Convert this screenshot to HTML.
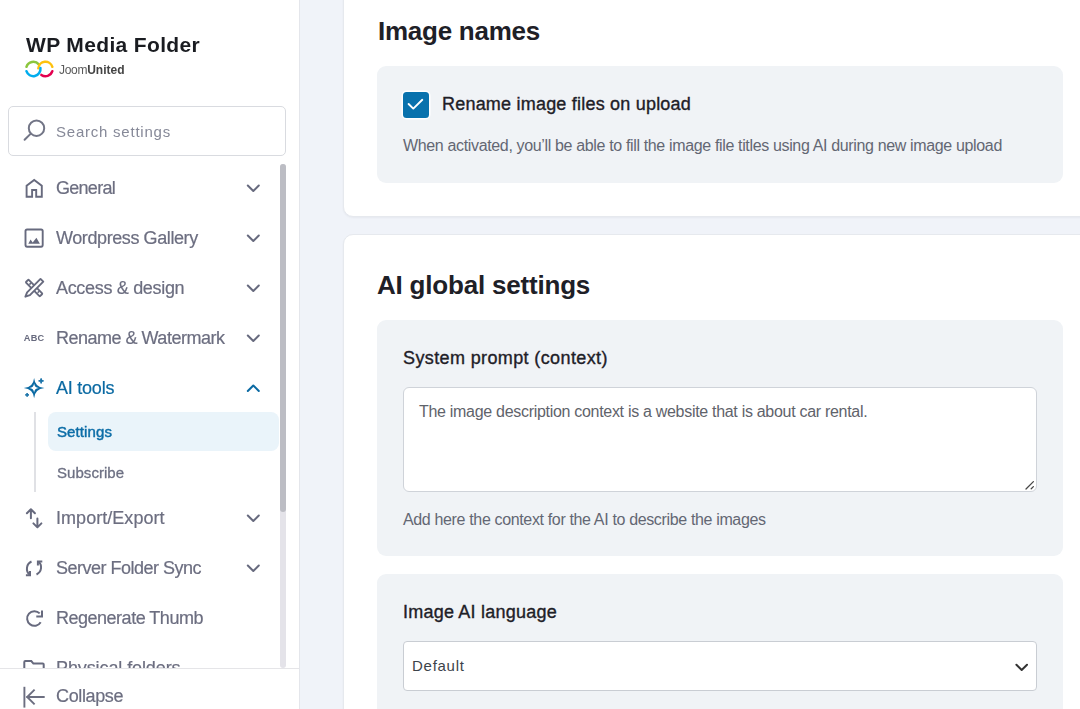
<!DOCTYPE html>
<html><head><meta charset="utf-8">
<style>
*{box-sizing:border-box;margin:0;padding:0}
html,body{width:1080px;height:709px;overflow:hidden}
body{position:relative;background:#f0f3f9;font-family:"Liberation Sans",sans-serif;}
.t{position:absolute;white-space:nowrap;line-height:1}
#side{position:absolute;left:0;top:0;width:300px;height:709px;background:#fff;border-right:1px solid #e4e6eb;overflow:hidden;will-change:transform}
.nav{color:#6c6e80;font-size:18px;-webkit-text-stroke:0.2px currentColor}
.ico{position:absolute}
.chev{position:absolute;left:246px;width:14px;height:9px}
.card{position:absolute;background:#fff;border:1px solid #e6e9ee;border-radius:10px;box-shadow:0 1px 2px rgba(30,40,60,0.05)}
.panel{position:absolute;background:#f0f3f6;border-radius:9px}
.h2{font-size:26px;font-weight:700;color:#1e2027}
.lbl{font-size:18px;color:#1e2027;-webkit-text-stroke:0.35px #1e2027}
.desc{font-size:16px;color:#636773}
</style></head><body>
<div id="side">
  <div class="t" style="left:26px;top:34px;font-size:21px;font-weight:700;color:#1a1c21;letter-spacing:0.35px">WP Media Folder</div>
  <!-- logo -->
  <svg style="position:absolute;left:0;top:0" width="300" height="709">
    <g fill="none" stroke-width="2.5" stroke-linecap="round">
      <path d="M26.45 66.78 A7.2 7.2 0 0 1 38.82 64.37" stroke="#8cc63e"/>
      <path d="M38.33 68.37 A7.2 7.2 0 0 1 52.35 66.78" stroke="#fec10d"/>
      <path d="M41.37 74.9 A7.2 7.2 0 0 0 52.35 71.22" stroke="#e3004f"/>
      <path d="M26.45 71.22 A7.2 7.2 0 0 0 40.43 68.0" stroke="#01adee"/>
    </g>
    <g fill="none" stroke="#727586" stroke-width="2" stroke-linecap="round">
      <circle cx="36.5" cy="128.2" r="7.7"/>
      <path d="M30.8 133.6 L24.6 139.8"/>
    </g>
    <g fill="none" stroke="#676a7e" stroke-width="1.9" stroke-linejoin="miter">
      <!-- home -->
      <path d="M26.6 196.8 V185.8 L34.2 179.9 L41.8 185.8 V196.8 H36.2 V190 H32.1 V196.8 Z"/>
      <!-- image -->
      <rect x="25.5" y="229.5" width="17.2" height="17.2" rx="1.6"/>
      <!-- chevrons -->
      <g stroke-width="2" stroke-linecap="round" stroke-linejoin="round">
        <path d="M247.8 185.5 L253.3 191 L258.8 185.5"/>
        <path d="M247.8 235.5 L253.3 241 L258.8 235.5"/>
        <path d="M247.8 285.5 L253.3 291 L258.8 285.5"/>
        <path d="M247.8 335.5 L253.3 341 L258.8 335.5"/>
        <path d="M247.8 515.5 L253.3 521 L258.8 515.5"/>
        <path d="M247.8 565.5 L253.3 571 L258.8 565.5"/>
        <path d="M247.8 391 L253.3 385.5 L258.8 391" stroke="#0b6aa3"/>
      </g>
    </g>
    <g fill="none" stroke="#676a7e" stroke-width="1.9">
      <!-- ruler -->
      <rect x="2.15" y="10.05" width="19.9" height="3.9" rx="0.8" transform="translate(22 276) rotate(45 12.1 12)"/>
      <path d="M7.4 8.6 L9 7 M15.6 16.8 L17.2 15.2" transform="translate(22 276)" stroke-width="1.6"/>
      <!-- pencil -->
      <path d="M18.5 2.9 L21.3 5.7 L7.9 19.1 L3.4 20.7 L5.1 16.3 Z" transform="translate(22 276)" fill="#fff" stroke-linejoin="round"/>
    </g>
    <text x="34.1" y="341.4" text-anchor="middle" font-family="Liberation Sans" font-weight="700" font-size="9.2" fill="#676a7e" letter-spacing="0.2">ABC</text>
    <!-- sparkle -->
    <path fill="#0b6aa3" fill-rule="evenodd" d="M34.1 377.9 Q35 387.2 44.4 388.1 Q35 389 34.1 398.3 Q33.2 389 23.8 388.1 Q33.2 387.2 34.1 377.9 Z M34.1 383.6 Q34.5 387.65 38.7 388.1 Q34.5 388.55 34.1 392.6 Q33.7 388.55 29.5 388.1 Q33.7 387.65 34.1 383.6 Z"/>
    <g fill="#0b6aa3" stroke="#0b6aa3" stroke-linejoin="round" stroke-width="0.8">
      <path d="M41.1 378.3 L41.8 380.2 L43.7 380.9 L41.8 381.6 L41.1 383.5 L40.4 381.6 L38.5 380.9 L40.4 380.2 Z"/>
      <path d="M27.1 393 L27.7 394.3 L29 394.9 L27.7 395.5 L27.1 396.8 L26.5 395.5 L25.2 394.9 L26.5 394.3 Z"/>
    </g>
    <g fill="none" stroke="#676a7e" stroke-width="2" stroke-linecap="round" stroke-linejoin="round">
      <!-- import export -->
      <path d="M30.9 509.5 V518.2 M26.9 513.3 L30.9 509.3 L34.9 513.3"/>
      <path d="M37.4 518.6 V527.3 M33.4 523.4 L37.4 527.4 L41.4 523.4"/>
    </g>
    <g fill="none" stroke="#676a7e" stroke-width="2">
      <!-- sync -->
      <path d="M31.5 561.5 A7.9 7.9 0 0 0 29.6 574.6" />
      <path d="M25.9 575.3 H30 V570.9" />
      <path d="M36.5 574.5 A7.9 7.9 0 0 0 38.4 561.4" />
      <path d="M42.3 561.4 H37.9 V565.6" />
      <!-- refresh -->
      <path d="M40.7 622.3 A7.3 7.3 0 1 1 39.7 613.4" />
      <path d="M42 610.6 V616.4 H36.3" />
      <!-- folder -->
      <path d="M24.3 669 V662 Q24.3 661 25.3 661 H31.3 L33.4 663.6 H42.7 Q43.7 663.6 43.7 664.6 V669" />
    </g>
  <path fill="#676a7e" d="M28.3 243.7 L30.6 239.6 L32.7 242.4 L36.4 237.8 L39.9 243.7 Z"/>
  </svg>
  <div class="t" style="left:59px;top:64px;font-size:12px;color:#5a5a5a"><span style="letter-spacing:-0.3px">Joom</span><b style="color:#444">United</b></div>

  <div style="position:absolute;left:8px;top:106px;width:278px;height:50px;border:1px solid #d9dbe0;border-radius:5px"></div>
  <svg class="ico" style="left:22px;top:118px" width="24" height="24" viewBox="0 0 24 24"></svg>
  <div class="t" style="left:56px;top:124px;font-size:15px;color:#868998;letter-spacing:0.77px">Search settings</div>

  <div class="t nav" style="left:56px;top:179px;letter-spacing:-0.72px">General</div>
  <div class="t nav" style="left:56px;top:229px;letter-spacing:-0.41px">Wordpress Gallery</div>
  <div class="t nav" style="left:56px;top:279px;letter-spacing:-0.32px">Access &amp; design</div>
  <div class="t nav" style="left:56px;top:329px;letter-spacing:-0.5px">Rename &amp; Watermark</div>
  <div class="t nav" style="left:56px;top:379px;letter-spacing:-0.23px;color:#0b6aa3">AI tools</div>
  <div style="position:absolute;left:34px;top:412px;width:1.5px;height:80px;background:#e0e1e5"></div>
  <div style="position:absolute;left:48px;top:412px;width:231px;height:39px;background:#eaf4fa;border-radius:8px"></div>
  <div class="t" style="left:57px;top:423.5px;font-size:15px;color:#0c6da7;-webkit-text-stroke:0.45px #0c6da7;letter-spacing:0.1px">Settings</div>
  <div class="t" style="left:57px;top:465px;font-size:15px;color:#6d7083;-webkit-text-stroke:0.3px #6d7083;letter-spacing:0.05px">Subscribe</div>
  <div class="t nav" style="left:56px;top:509px;letter-spacing:0.04px">Import/Export</div>
  <div class="t nav" style="left:56px;top:559px;letter-spacing:-0.5px">Server Folder Sync</div>
  <div class="t nav" style="left:56px;top:609px;letter-spacing:-0.49px">Regenerate Thumb</div>
  <div class="t nav" style="left:56px;top:659px;letter-spacing:-0.1px">Physical folders</div>

  <div style="position:absolute;left:280px;top:164px;width:6px;height:504px;background:#e4e3e9;border-radius:3px"></div>
  <div style="position:absolute;left:280px;top:164px;width:6px;height:348px;background:#bcbdc4;border-radius:3px"></div>

  <div style="position:absolute;left:0;top:668px;width:300px;height:41px;background:#fff;border-top:1px solid #e5e5e8"></div>
  <div class="t nav" style="left:56px;top:687px;letter-spacing:-0.36px">Collapse</div>
  <svg style="position:absolute;left:0;top:668px" width="60" height="41" viewBox="0 668 60 41">
    <g fill="none" stroke="#6c6e80" stroke-width="1.9" stroke-linecap="butt" stroke-linejoin="miter">
      <path d="M24.4 686.8 V707.6"/>
      <path d="M26.2 697 H44.7 M34.6 689.6 L27.2 697 L34.6 704.4"/>
    </g>
  </svg>
</div>

<div class="card" style="left:343px;top:-20px;width:800px;height:236.5px"></div>
<div class="t h2" style="left:378px;top:18px;letter-spacing:-0.25px">Image names</div>
<div class="panel" style="left:377px;top:66px;width:686px;height:117px"></div>
<div style="position:absolute;left:403px;top:91.5px;width:26px;height:26.2px;background:#0972ad;border-radius:3.5px;box-shadow:0 0 0 1.5px #fff"></div>
<svg style="position:absolute;left:400px;top:88px" width="32" height="32" viewBox="400 88 32 32"><path d="M408.6 104 L413.3 108.6 L422.3 99.8" fill="none" stroke="#fff" stroke-width="1.9" stroke-linecap="round" stroke-linejoin="round"/></svg>
<div class="t lbl" style="left:442px;top:95px;letter-spacing:0.21px">Rename image files on upload</div>
<div class="t desc" style="left:403px;top:138px;letter-spacing:-0.35px">When activated, you’ll be able to fill the image file titles using AI during new image upload</div>

<div class="card" style="left:343px;top:234px;width:800px;height:600px"></div>
<div class="t h2" style="left:377px;top:272px;letter-spacing:-0.2px">AI global settings</div>
<div class="panel" style="left:377px;top:320px;width:686px;height:236px"></div>
<div class="t lbl" style="left:403px;top:349px;letter-spacing:0.38px">System prompt (context)</div>
<div style="position:absolute;left:403px;top:387px;width:634px;height:105px;background:#fff;border:1px solid #cfd3d9;border-radius:6px"></div>
<div class="t desc" style="left:419px;top:404px;letter-spacing:-0.3px;color:#5f636b">The image description context is a website that is about car rental.</div>
<svg style="position:absolute;left:1020px;top:476px" width="20" height="20" viewBox="1020 476 20 20"><path d="M1026 489 L1033.4 481.6 M1031.2 488.8 L1033.4 486.6" fill="none" stroke="#474747" stroke-width="1.3" stroke-linecap="round"/></svg>
<div class="t desc" style="left:403px;top:512px;letter-spacing:-0.35px">Add here the context for the AI to describe the images</div>

<div class="panel" style="left:377px;top:574px;width:686px;height:200px"></div>
<div class="t lbl" style="left:403px;top:603px;letter-spacing:0.22px">Image AI language</div>
<div style="position:absolute;left:403px;top:641px;width:634px;height:50px;background:#fff;border:1px solid #c9cdd3;border-radius:4px"></div>
<div class="t" style="left:412px;top:658px;font-size:15px;color:#3c434a;letter-spacing:0.73px">Default</div>
<svg style="position:absolute;left:1010px;top:658px" width="24" height="20" viewBox="1010 658 24 20"><path d="M1016.4 664.8 L1021.7 670 L1027 664.8" fill="none" stroke="#333" stroke-width="2" stroke-linecap="round" stroke-linejoin="round"/></svg>
</body></html>
